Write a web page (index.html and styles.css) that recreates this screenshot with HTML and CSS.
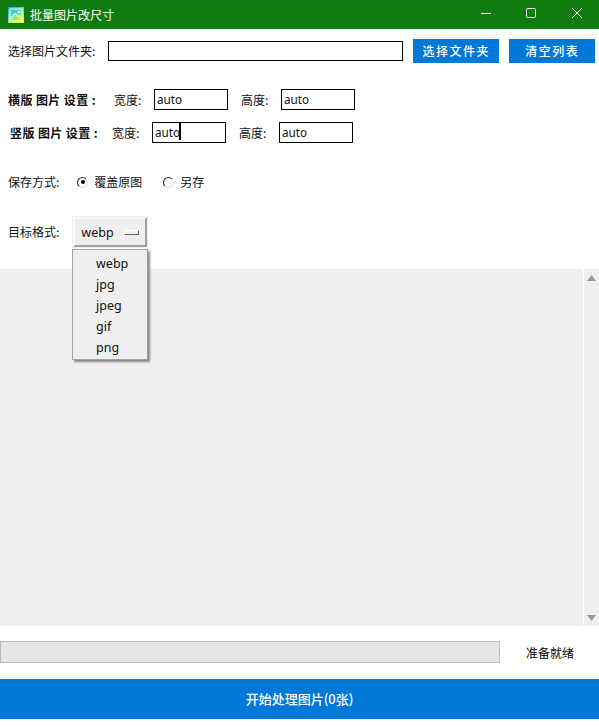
FILE: index.html
```html
<!DOCTYPE html>
<html>
  <head>
    <meta charset="utf-8">
    <title>批量图片改尺寸</title>
    <link rel="stylesheet" href="styles.css">
  </head>
  <body>
    <div class="titlebar">
      <svg class="appicon" width="16" height="16" viewBox="0 0 16 16">
        <defs>
          <linearGradient id="g" x1="0" y1="0" x2="0.6" y2="1">
            <stop offset="0" stop-color="#1ea0e6"/>
            <stop offset="0.55" stop-color="#5ce8b4"/>
            <stop offset="1" stop-color="#ffee00"/>
          </linearGradient>
        </defs>
        <rect x="0" y="0" width="16" height="16" fill="url(#g)"/>
        <rect x="2" y="2" width="12" height="12" fill="none" stroke="#e8fff0" stroke-width="1"/>
        <path d="M3 12 L7 6.5 L9.5 10 L11 8.5 L13 12" fill="none" stroke="#fff" stroke-width="1"/>
        <circle cx="11" cy="5" r="1" fill="#fff"/>
      </svg>
      <span class="apptitle">批量图片改尺寸</span>
      <div class="winbtns">
        <svg width="46" height="29" viewBox="0 0 46 29"><path d="M19 13.5H29" stroke="#fff" fill="none"/></svg>
        <svg width="46" height="29" viewBox="0 0 46 29"><rect x="18.5" y="8.5" width="9" height="9" rx="1" stroke="#fff" fill="none"/></svg>
        <svg width="46" height="29" viewBox="0 0 46 29"><path d="M18 8L28 18M28 8L18 18" stroke="#fff" fill="none"/></svg>
      </div>
    </div>

    <div class="row row-folder">
      <span class="label">选择图片文件夹:</span>
      <div class="field field-path"></div>
      <div class="btn">选择文件夹</div>
      <div class="btn">清空列表</div>
    </div>

    <div class="row row-landscape">
      <span class="label-b">横版 图片 设置 :</span>
      <span class="label lbl-w">宽度:</span>
      <div class="field">auto</div>
      <span class="label lbl-h">高度:</span>
      <div class="field">auto</div>
    </div>

    <div class="row row-portrait">
      <span class="label-b">竖版 图片 设置 :</span>
      <span class="label lbl-w">宽度:</span>
      <div class="field">auto<i class="caret"></i></div>
      <span class="label lbl-h">高度:</span>
      <div class="field">auto</div>
    </div>

    <div class="row row-save">
      <span class="label">保存方式:</span>
      <span class="radio on"></span>
      <span class="label opt1">覆盖原图</span>
      <span class="radio radio2"></span>
      <span class="label opt2">另存</span>
    </div>

    <div class="row row-format">
      <span class="label">目标格式:</span>
      <div class="combo">webp<i class="indicator"></i></div>
    </div>

    <div class="menu">
      <div class="item">webp</div>
      <div class="item">jpg</div>
      <div class="item">jpeg</div>
      <div class="item">gif</div>
      <div class="item">png</div>
    </div>

    <div class="list">
      <div class="scroll">
        <svg width="9" height="6" viewBox="0 0 9 6"><path d="M4.5 0L9 6H0Z" fill="#999"/></svg>
        <svg width="9" height="6" viewBox="0 0 9 6"><path d="M0 0H9L4.5 6Z" fill="#999"/></svg>
      </div>
    </div>

    <div class="row-progress">
      <div class="progress"></div>
      <span class="status">准备就绪</span>
    </div>

    <div class="start">开始处理图片(0张)</div>
  </body>
</html>
```

FILE: styles.css
```css
* {
  margin: 0;
  padding: 0;
  box-sizing: border-box;
}
body {
  position: relative;
  width: 599px;
  height: 727px;
  overflow: hidden;
  background: #fff;
  font-family: "Noto Sans CJK SC", "Noto Sans", sans-serif;
  font-size: 12px;
  color: #111;
}
.titlebar {
  display: flex;
  align-items: center;
  height: 29px;
  padding-left: 8px;
  background: #107c10;
  color: #fff;
}
.appicon {
  margin-right: 6px;
}
.apptitle {
  font-size: 12px;
}
.winbtns {
  display: flex;
  margin-left: auto;
  margin-right: -1px;
}

.row {
  display: flex;
  align-items: center;
}
.label {
  line-height: 20px;
  white-space: nowrap;
}
.label-b {
  width: 98px;
  font-weight: 700;
  letter-spacing: 0.4px;
  white-space: pre;
}
.field {
  flex-shrink: 0;
  width: 74px;
  height: 21px;
  padding-left: 2px;
  border: 1px solid #000;
  font-family: "Noto Sans", sans-serif;
  font-size: 11.7px;
  line-height: 19px;
}
.caret {
  display: inline-block;
  width: 2px;
  height: 17px;
  margin-left: -1px;
  vertical-align: top;
  background: #000;
}

.row-folder {
  height: 24px;
  margin-top: 10px;
  padding-left: 8px;
}
.field-path {
  width: 295px;
  height: 20px;
  margin-left: 13px;
  margin-right: 10px;
}
.btn {
  flex-shrink: 0;
  width: 86px;
  height: 24px;
  margin-right: 10px;
  background: #0078d7;
  color: #fff;
  font-weight: 500;
  letter-spacing: 1.5px;
  line-height: 24px;
  text-align: center;
}
.btn:last-child {
  margin-right: 0;
}

.row-landscape {
  height: 21px;
  margin-top: 26px;
  padding-left: 8px;
}
.row-portrait {
  height: 21px;
  margin-top: 12px;
  padding-left: 10px;
}
.lbl-w {
  width: 48px;
  padding-left: 8px;
}
.row-portrait .lbl-w {
  width: 46px;
  padding-left: 6px;
}
.row-portrait .label-b {
  width: 96px;
}
.lbl-h {
  width: 53px;
  padding-left: 13px;
}

.row-save {
  height: 20px;
  margin-top: 29px;
  padding-left: 8px;
}
.radio {
  position: relative;
  width: 11px;
  height: 11px;
  margin-left: 18px;
  border: 1px solid #222;
  border-right-color: #ddd;
  border-bottom-color: #ddd;
  border-radius: 50%;
  background: #fff;
}
.radio.on::after {
  content: "";
  position: absolute;
  left: 2.5px;
  top: 2.5px;
  width: 4px;
  height: 4px;
  border-radius: 50%;
  background: #000;
}
.radio2 {
  margin-left: 21px;
}
.opt1 {
  margin-left: 6px;
}
.opt2 {
  margin-left: 6px;
}

.row-format {
  height: 30px;
  margin-top: 25px;
  padding-left: 8px;
}
.combo {
  display: flex;
  align-items: center;
  justify-content: space-between;
  width: 74px;
  height: 30px;
  margin-left: 14px;
  padding: 0 6px;
  background: #efefef;
  border: 2px solid #f8f8f8;
  border-right-color: #a0a0a0;
  border-bottom-color: #a0a0a0;
  box-shadow: 0 0 0 1px #f0f0f0;
  font-family: "Noto Sans", sans-serif;
  font-size: 12.5px;
}
.indicator {
  width: 15px;
  height: 5px;
  background: #efefef;
  border: 1px solid #fff;
  border-right-color: #666;
  border-bottom-color: #666;
}

.list {
  display: flex;
  justify-content: flex-end;
  height: 357px;
  margin-top: 22px;
  background: #efefef;
}
.scroll {
  display: flex;
  flex-direction: column;
  justify-content: space-between;
  align-items: center;
  width: 16px;
  padding: 6px 0 5px;
  border-left: 1px solid #fff;
}

.menu {
  position: absolute;
  left: 72px;
  top: 249px;
  width: 76px;
  height: 111px;
  padding-top: 3px;
  background: #efefef;
  border: 1px solid #a0a0a0;
  box-shadow: 2px 2px 2px #888;
  font-family: "Noto Sans", sans-serif;
  font-size: 12.5px;
  z-index: 2;
}
.item {
  height: 21px;
  padding-left: 23px;
  line-height: 21px;
}

.row-progress {
  display: flex;
  align-items: center;
  height: 22px;
  margin-top: 15px;
}
.progress {
  width: 500px;
  height: 22px;
  background: #e6e6e6;
  border: 1px solid #bcbcbc;
}
.status {
  margin-left: 26px;
  color: #000;
}
.start {
  height: 40px;
  margin-top: 16px;
  background: #0078d7;
  color: #fff;
  font-size: 13px;
  font-weight: 500;
  line-height: 40px;
  text-align: center;
}
```
